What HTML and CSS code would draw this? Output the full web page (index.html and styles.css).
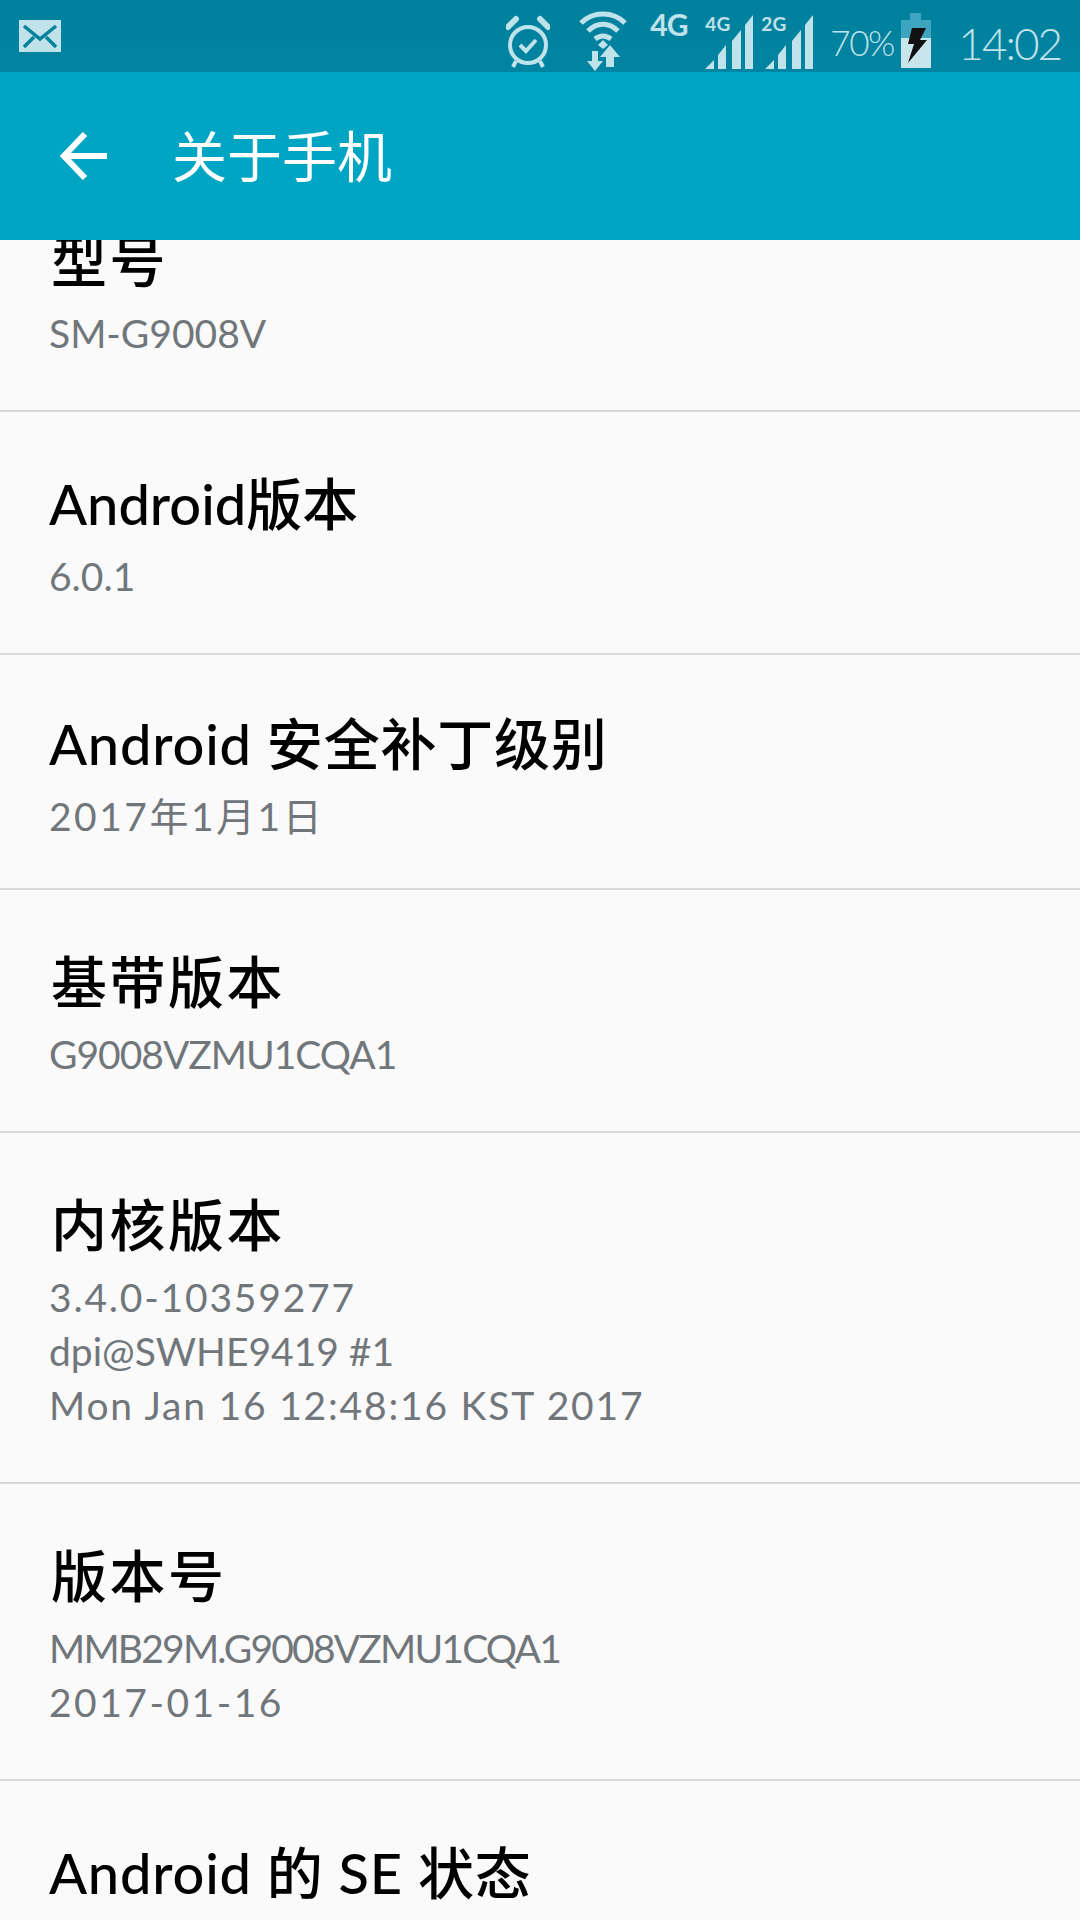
FILE: index.html
```html
<!DOCTYPE html>
<html lang="zh-CN">
<head>
    <meta charset="UTF-8">
    <meta name="viewport" content="width=device-width, initial-scale=1.0">
    <title>关于手机</title>
    <link rel="stylesheet" href="styles.css">
</head>
<body>
    <div class="phone">
        <div class="statusBar">
            <svg class="icon iconMail" viewBox="0 0 42 32">
                <rect width="42" height="32" fill="#c0e2ea"/>
                <path d="M5 6 L21 19 L37 6 M5 27 L15 17 M37 27 L27 17" fill="none" stroke="#00829f" stroke-width="3.5"/>
            </svg>
            <div class="statusRight">
                <svg class="icon iconAlarm" viewBox="0 0 44 54">
                    <g fill="none" stroke="#c0e2ea">
                        <circle cx="22" cy="30" r="18" stroke-width="4"/>
                        <path d="M14 30 L20 36 L30 25" stroke-width="4"/>
                        <path d="M2 12 L10 4 M42 12 L34 4" stroke-width="6" stroke-linecap="round"/>
                        <path d="M10 46 L7 52 M34 46 L37 52" stroke-width="4"/>
                    </g>
                </svg>
                <svg class="icon iconWifi" viewBox="0 0 48 60">
                    <g fill="none" stroke="#c0e2ea" stroke-width="5">
                        <path d="M2 12 C14 0 34 0 46 12"/>
                        <path d="M9 20 C18 11 30 11 39 20"/>
                        <path d="M16 28 C21 24 27 24 32 28"/>
                    </g>
                    <path d="M24 29 L29 34 L24 38 L19 34 Z" fill="#c0e2ea"/>
                    <path d="M13 40 H19 V50 H24 L16 60 L8 50 H13 Z M27 46 H21 L31 34 L41 46 H35 V56 H27 Z" fill="#c0e2ea"/>
                </svg>
                <span class="net">4G</span>
                <div class="signal">
                    <svg class="icon" viewBox="0 0 48 54">
                        <path d="M0 54 L9 45 V54 Z M13 40 L21 30 V54 H13 Z M27 26 L36 15 V54 H27 Z" fill="#c0e2ea"/>
                        <path d="M40 10 L48 0 V54 H40 Z" fill="#c0e2ea"/>
                    </svg>
                    <span class="sigLabel">4G</span>
                </div>
                <div class="signal second">
                    <svg class="icon" viewBox="0 0 52 54">
                        <path d="M4 54 L13 45 V54 Z M17 40 L25 30 V54 H17 Z M31 26 L40 15 V54 H31 Z" fill="#c0e2ea"/>
                        <path d="M44 10 L52 0 V54 H44 Z" fill="#c0e2ea"/>
                    </svg>
                    <span class="sigLabel">2G</span>
                </div>
                <span class="percent">70%</span>
                <svg class="icon iconBattery" viewBox="0 0 30 55">
                    <rect x="9" y="0" width="11" height="7" fill="#3da5bf"/>
                    <rect x="0" y="7" width="30" height="18" fill="#3da5bf"/>
                    <rect x="0" y="25" width="30" height="30" fill="#c9e5ec"/>
                    <path d="M11 15 H25 L19 27 H26 L7 50 L13 31 H7 Z" fill="#111"/>
                </svg>
                <span class="clock">14:02</span>
            </div>
        </div>
        <div class="appBar">
            <svg class="icon iconBack" viewBox="0 0 47 48">
                <path d="M25 2 L4 24 L25 46 M4 24 H47" fill="none" stroke="#fff" stroke-width="6"/>
            </svg>
            <div class="appTitle">关于手机</div>
        </div>
        <div class="list">
            <div class="row firstRow">
                <div class="rowTitle">型号</div>
                <div class="rowSub">SM-G9008V</div>
            </div>
            <div class="row">
                <div class="rowTitle latin">Android版本</div>
                <div class="rowSub">6.0.1</div>
            </div>
            <div class="row shortRow">
                <div class="rowTitle latin mixed">Android 安全补丁级别</div>
                <div class="rowSub spreadMore">2017年1月1日</div>
            </div>
            <div class="row">
                <div class="rowTitle">基带版本</div>
                <div class="rowSub tight">G9008VZMU1CQA1</div>
            </div>
            <div class="row">
                <div class="rowTitle">内核版本</div>
                <div class="rowSub spread">3.4.0-10359277</div>
                <div class="rowSub">dpi@SWHE9419 #1</div>
                <div class="rowSub spread">Mon Jan 16 12:48:16 KST 2017</div>
            </div>
            <div class="row">
                <div class="rowTitle">版本号</div>
                <div class="rowSub tightMore">MMB29M.G9008VZMU1CQA1</div>
                <div class="rowSub spreadMore">2017-01-16</div>
            </div>
            <div class="row">
                <div class="rowTitle latin mixed">Android 的 SE 状态</div>
            </div>
        </div>
    </div>
</body>
</html>
```

FILE: styles.css
```css
* {
    margin: 0;
    padding: 0;
    box-sizing: border-box;
    font-family: 'Lato', 'Noto Sans CJK SC', sans-serif;
}
body {
    background-color: #fafafa;
}
.phone {
    display: flex;
    flex-direction: column;
    width: 1080px;
    height: 1920px;
    overflow: hidden;
}
.icon {
    display: block;
    flex-shrink: 0;
}

/* status bar */
.statusBar {
    display: flex;
    justify-content: space-between;
    height: 72px;
    padding: 0 19px;
    background: linear-gradient(#00809d, #0084a1);
    color: #c0e2ea;
}
.iconMail {
    width: 42px;
    height: 32px;
    margin-top: 20px;
}
.statusRight {
    display: flex;
    align-items: flex-start;
}
.iconAlarm {
    width: 44px;
    height: 54px;
    margin-top: 15px;
}
.iconWifi {
    width: 48px;
    height: 60px;
    margin: 11px 0 0 29px;
}
.net {
    width: 39px;
    margin: 6px 0 0 23px;
    font-size: 30px;
    line-height: 36px;
    font-weight: 700;
    letter-spacing: -1px;
}
.signal {
    position: relative;
    width: 48px;
    height: 54px;
    margin: 15px 0 0 16px;
}
.signal.second {
    width: 52px;
    margin-left: 8px;
}
.sigLabel {
    position: absolute;
    left: 0;
    top: -3px;
    font-size: 19px;
    line-height: 24px;
    font-weight: 700;
}
.percent {
    width: 60px;
    margin: 22px 0 0 17px;
    font-size: 35px;
    line-height: 40px;
    font-weight: 300;
    letter-spacing: -1.5px;
}
.iconBattery {
    width: 30px;
    height: 55px;
    margin: 13px 0 0 11px;
}
.clock {
    margin: 17px 0 0 27px;
    font-size: 44px;
    line-height: 52px;
    font-weight: 300;
    letter-spacing: -2px;
}

/* app bar */
.appBar {
    display: flex;
    align-items: center;
    height: 168px;
    padding-left: 60px;
    background-color: #00a5c4;
}
.iconBack {
    width: 47px;
    height: 48px;
}
.appTitle {
    margin-left: 65px;
    color: #fff;
    font-size: 55px;
    line-height: 64px;
}

/* list rows */
.list {
    flex: 1;
    overflow: hidden;
}
.row {
    padding: 60px 49px 50px;
    border-bottom: 2px solid #d9d9d9;
}
.firstRow {
    margin-top: -71px;
}
.shortRow {
    padding-top: 57px;
    padding-bottom: 45px;
}
.rowTitle {
    margin-bottom: 13px;
    padding-left: 2px;
    color: #000;
    font-size: 56px;
    line-height: 64px;
    font-weight: 500;
    letter-spacing: 2.5px;
}
.rowTitle.latin {
    padding-left: 0;
    letter-spacing: 0;
}
.rowTitle.mixed {
    letter-spacing: 0.8px;
}
.rowSub {
    color: #71767a;
    font-size: 39px;
    line-height: 54px;
}
.spread {
    letter-spacing: 1.8px;
}
.spreadMore {
    letter-spacing: 2.5px;
}
.tight {
    letter-spacing: -1px;
}
.tightMore {
    letter-spacing: -1.8px;
}
```
